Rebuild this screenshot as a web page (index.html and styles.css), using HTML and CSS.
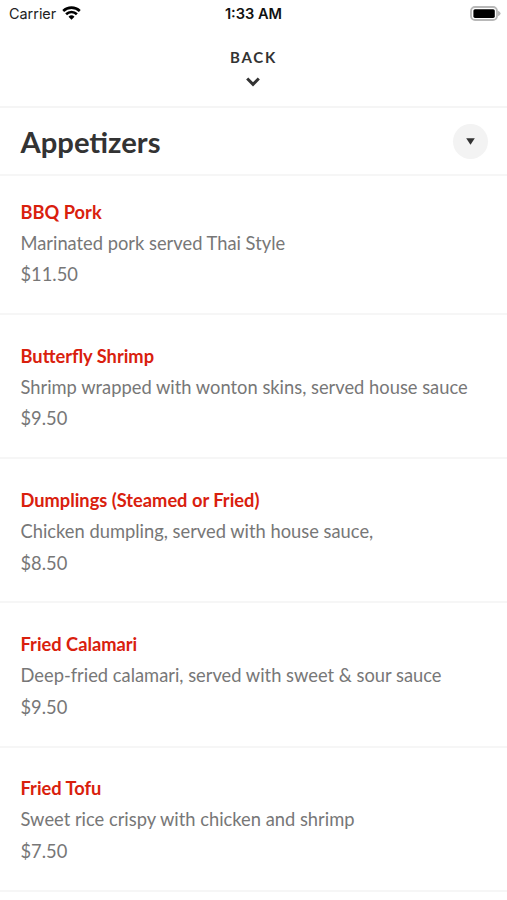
FILE: index.html
```html
<!DOCTYPE html>
<html lang="en">
<head>
<meta charset="utf-8">
<title>Appetizers</title>
<link rel="stylesheet" href="styles.css">
</head>
<body>
<div class="status">
  <div class="carrier"><span>Carrier</span>
    <svg width="19" height="14" viewBox="0 0 19 14"><g fill="none" stroke="#000" stroke-width="2.6"><path d="M1.2 5A12 12 0 0 1 17.8 5"/><path d="M4.1 8.2A7.7 7.7 0 0 1 14.9 8.2"/></g><path d="M6.5 10.7A4.5 4.5 0 0 1 12.5 10.7L9.5 13.7Z"/></svg>
  </div>
  <div class="time">1:33 AM</div>
  <div class="battery"><svg width="31" height="15" viewBox="0 0 31 15"><rect x="1" y="1" width="26" height="13" rx="4" fill="none" stroke="#b8b8b8" stroke-width="1.8"/><rect x="3.4" y="3.2" width="21.4" height="8.7" rx="1.6"/><path d="M28 4.8Q30.6 5.8 30.6 7.5T28 10.2Z" fill="#b8b8b8"/></svg></div>
</div>
<header class="back"><span>BACK</span>
  <svg width="14" height="10" viewBox="0 0 14 10"><path d="M1.2 1.5L7 7.3L12.8 1.5" fill="none" stroke="#333" stroke-width="3"/></svg>
</header>
<div class="heading"><h1>Appetizers</h1><div class="toggle"><svg width="9" height="7" viewBox="0 0 9 7"><path d="M.2 .2H8.8L4.5 6.8Z" fill="#333"/></svg></div></div>
<main>
  <section class="item"><h2>BBQ Pork</h2><p>Marinated pork served Thai Style</p><p>$11.50</p></section>
  <section class="item"><h2>Butterfly Shrimp</h2><p>Shrimp wrapped with wonton skins, served house sauce</p><p>$9.50</p></section>
  <section class="item"><h2>Dumplings (Steamed or Fried)</h2><p>Chicken dumpling, served with house sauce,</p><p>$8.50</p></section>
  <section class="item"><h2>Fried Calamari</h2><p>Deep-fried calamari, served with sweet &amp; sour sauce</p><p>$9.50</p></section>
  <section class="item"><h2>Fried Tofu</h2><p>Sweet rice crispy with chicken and shrimp</p><p>$7.50</p></section>
</main>
</body>
</html>
```
FILE: styles.css
```css
* { box-sizing: border-box; }
body { margin: 0; background: #fff; font-family: Lato, sans-serif; color: #333; height: 900px; overflow: hidden; }
svg { display: block; }
.status { height: 28px; padding: 0 6px 0 9px; display: grid; grid-template-columns: 1fr auto 1fr; align-items: center; font: 14.4px/28px Inter, sans-serif; color: #222; }
.carrier { display: flex; align-items: center; gap: 6px; }
.carrier svg { margin-top: -2px; }
.time { font-weight: 600; font-size: 14.6px; margin-right: 3px; color: #111; }
.battery { justify-self: end; margin-top: -1px; }
.back { height: 80px; border-bottom: 2px solid #f5f5f5; display: flex; flex-direction: column; align-items: center; padding-top: 19px; font-weight: 700; font-size: 15px; line-height: 20px; letter-spacing: 1.7px; }
.back svg { margin: 10px 1px 0 0; }
.heading { height: 68px; border-bottom: 2px solid #f6f6f6; display: flex; align-items: center; justify-content: space-between; padding: 0 19px 0 20.5px; }
h1 { margin: 2px 0 0; font-size: 29.2px; font-weight: 700; line-height: 40px; }
.toggle { width: 35px; height: 35px; border-radius: 50%; background: #f3f3f3; display: flex; align-items: center; justify-content: center; }
.item { height: 144.2px; padding: 24.7px 20.5px 0; border-bottom: 2px solid #f6f6f6; }
.item:first-child { height: 139px; padding-top: 19.5px; }
h2 { margin: 0; font-size: 18.26px; line-height: 32px; font-weight: 700; color: #d9200d; }
p { margin: 0; font-size: 18.32px; line-height: 31.7px; color: #777; }
```
